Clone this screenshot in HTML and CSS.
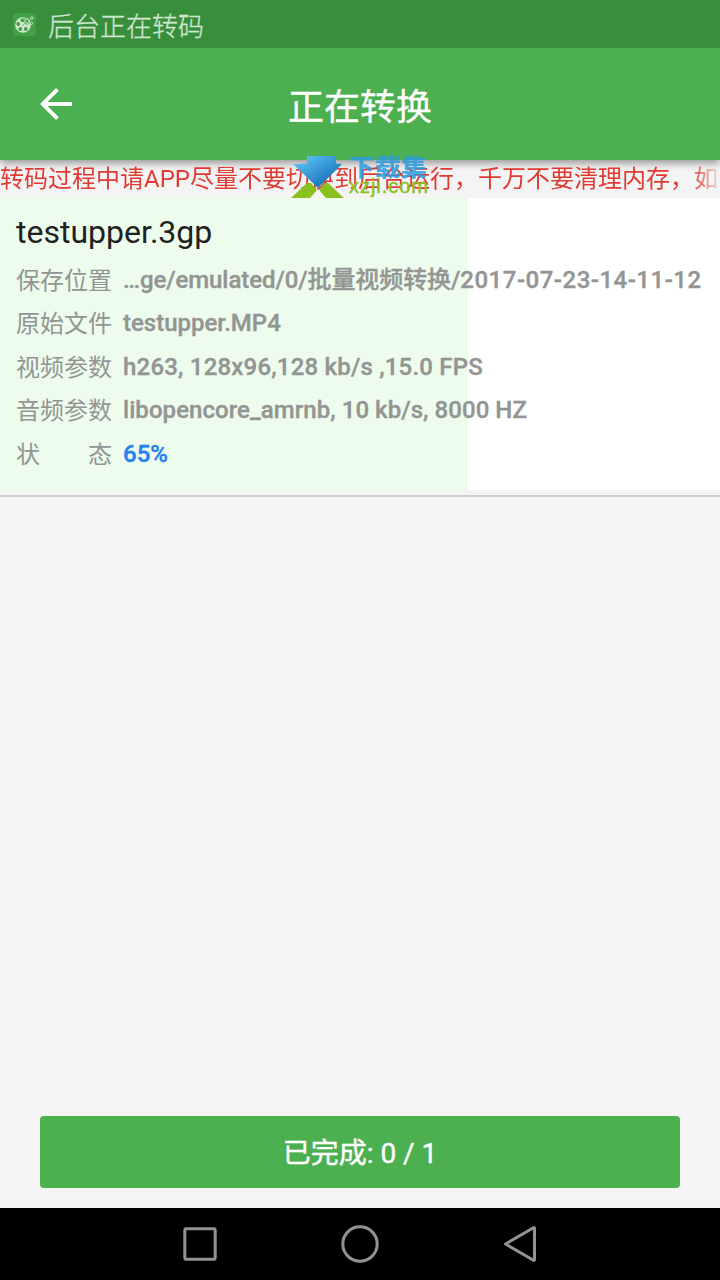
FILE: index.html
```html
<!DOCTYPE html>
<html lang="zh-CN">
<head>
<meta charset="utf-8">
<title>正在转换</title>
<link rel="stylesheet" href="styles.css">
</head>
<body>
<div class="screen">
  <div class="status-bar">
    <svg class="app-icon" width="23" height="23" viewBox="0 0 23 23">
      <rect width="23" height="23" rx="4" fill="#43a047"/>
      <circle cx="10" cy="12" r="7.8" fill="#cfe6d0"/>
      <g fill="#43a047">
        <circle cx="9.4" cy="7.2" r="1.9"/><circle cx="5.2" cy="11" r="1.9"/><circle cx="7.3" cy="16" r="1.9"/><circle cx="12.8" cy="16" r="1.9"/><circle cx="10" cy="11.9" r=".7"/>
      </g>
      <circle cx="14" cy="8" r="3.4" fill="#43a047"/>
      <circle cx="14" cy="8" r="2.2" fill="none" stroke="#cfe6d0" stroke-width="1.6" stroke-dasharray="1.4 .5"/>
      <circle cx="18.8" cy="5" r="1.2" fill="none" stroke="#cfe6d0"/>
      <circle cx="18.6" cy="10.4" r="1.1" fill="none" stroke="#cfe6d0"/>
    </svg>
    <span class="status-text">后台正在转码</span>
  </div>
  <header class="toolbar">
    <svg class="back" width="32" height="32" viewBox="0 0 32 32"><path d="M32 14H7.6L18.8 2.8 16 0 0 16l16 16 2.8-2.8L7.6 18H32z" fill="#fff"/></svg>
    <h1 class="title">正在转换</h1>
  </header>
  <div class="notice">
    <p class="marquee">转码过程中请APP尽量不要切换到后台运行，千万不要清理内存，如</p>
    <div class="watermark">
      <svg class="mark" width="54" height="43" viewBox="0 0 54 43">
        <defs><linearGradient id="arrow" x1="0" y1="0" x2="1" y2="1"><stop offset="0.1" stop-color="#5cc4f2"/><stop offset="0.8" stop-color="#1672bb"/></linearGradient></defs>
        <path d="M0 42L16 27H20L26 34 19 42zM53 42L37 27H34L28 34 35 42z" fill="#8ac11f"/>
        <path d="M16 0H45V7.5L51 8 27 32 2 8 16 7.5z" fill="url(#arrow)"/>
      </svg>
      <div class="mark-name">下载集</div>
      <div class="mark-site">xzji.com</div>
    </div>
  </div>
  <section class="task">
    <div class="progress" style="width:65%"></div>
    <div class="details">
      <h2 class="name">testupper.3gp</h2>
      <div class="row"><span class="label">保存位置</span><b class="value path">…ge/emulated/0/批量视频转换/<span class="date">2017-07-23-14-11-12</span></b></div>
      <div class="row"><span class="label">原始文件</span><b class="value">testupper.MP4</b></div>
      <div class="row"><span class="label">视频参数</span><b class="value video">h263, 128x96,128 kb/s ,15.0 FPS</b></div>
      <div class="row"><span class="label">音频参数</span><b class="value audio">libopencore_amrnb, 10 kb/s, 8000 HZ</b></div>
      <div class="row"><span class="label split"><i>状</i><i>态</i></span><b class="value percent">65%</b></div>
    </div>
  </section>
  <main class="space"></main>
  <div class="footer"><button class="done">已完成: 0 / 1</button></div>
  <nav class="nav-bar">
    <svg width="40" height="40" viewBox="0 0 40 40"><rect x="4.8" y="4.8" width="30.4" height="30.4" rx="1.5"/></svg>
    <svg width="40" height="40" viewBox="0 0 40 40"><circle cx="20" cy="20" r="17.2"/></svg>
    <svg width="40" height="40" viewBox="0 0 40 40"><path d="M5.5 20L33.5 3.7Q34.5 3.2 34.5 4.4V35.6Q34.5 36.8 33.5 36.3Z"/></svg>
  </nav>
</div>
</body>
</html>
```
FILE: styles.css
```css
* { box-sizing: border-box; }
body, h1, h2, p { margin: 0; }
body { font-family: Roboto, "Noto Sans CJK SC", sans-serif; background: #f4f4f4; }
.screen { width: 720px; height: 1280px; display: flex; flex-direction: column; overflow: hidden; }
.status-bar { height: 48px; flex: none; display: flex; align-items: center; padding-left: 13px; gap: 12px; background: #398e3c; position: relative; z-index: 2; }
.status-text { font-size: 26px; line-height: 42px; font-weight: 300; color: #cfe6d0; padding-top: 6px; -webkit-text-stroke: .3px #cfe6d0; }
.toolbar { height: 112px; flex: none; display: grid; grid-template-columns: 32px 1fr 32px; align-items: center; padding: 0 40px; background: #4caf50; box-shadow: 0 3px 8px rgba(0,0,0,.4); z-index: 1; }
.title { font-size: 36px; line-height: 48px; font-weight: 400; -webkit-text-stroke: .3px #fff; color: #fff; text-align: center; padding-top: 7px; }
.notice { height: 38px; flex: none; position: relative; z-index: 2; }
.marquee { font-size: 24px; line-height: 36px; padding-top: 1px; color: #e03a32; white-space: nowrap; -webkit-mask-image: linear-gradient(90deg, #000 690px, transparent 724px); mask-image: linear-gradient(90deg, #000 690px, transparent 724px); }
.watermark { position: absolute; left: 291px; top: -4px; width: 140px; height: 43px; }
.mark { position: absolute; left: 0; top: 0; }
.mark-name { position: absolute; left: 58px; top: -2px; font-size: 26px; line-height: 28px; font-weight: 900; color: #2a9ce0; opacity: .85; white-space: nowrap; transform: scaleY(.9); }
.mark-site { position: absolute; left: 58px; top: 19px; font: 20px/22px "Liberation Sans", sans-serif; letter-spacing: .95px; color: #8ac11f; -webkit-text-stroke: .4px #8ac11f; }
.task { height: 299px; flex: none; display: grid; background: linear-gradient(#fff 292px, #f4f4f4 292px); border-bottom: 2px solid #cfcfcf; }
.progress, .details { grid-area: 1 / 1; }
.progress { height: 292px; background: #edfced; }
.details { padding: 10px 16px 0; }
.name { font-size: 32px; line-height: 48px; font-weight: 400; color: #212121; height: 51px; }
.row { display: flex; gap: 11px; height: 43.4px; line-height: 43px; font-size: 24px; color: #939593; white-space: nowrap; }
.label { width: 96px; padding-top: 1px; }
.split { display: flex; justify-content: space-between; }
.split i { font-style: normal; }
.value { font-weight: 500; -webkit-text-stroke: .35px currentColor; }
.path { letter-spacing: -.08px; }
.date { letter-spacing: .5px; }
.video { letter-spacing: .2px; }
.audio { letter-spacing: .06px; }
.percent { color: #2580f0; }
.space { flex: 1; }
.footer { flex: none; padding: 0 40px 20px; }
.done { width: 100%; height: 72px; border: 0; border-radius: 4px; background: #4caf50; color: #fff; font: 400 28px/36px Roboto, "Noto Sans CJK SC", sans-serif; -webkit-text-stroke: .4px #fff; padding: 3px 0 0; }
.nav-bar { height: 72px; flex: none; display: flex; justify-content: center; align-items: center; gap: 120px; background: #000; }
.nav-bar svg { fill: none; stroke: #929292; stroke-width: 3; stroke-linejoin: round; }
```
